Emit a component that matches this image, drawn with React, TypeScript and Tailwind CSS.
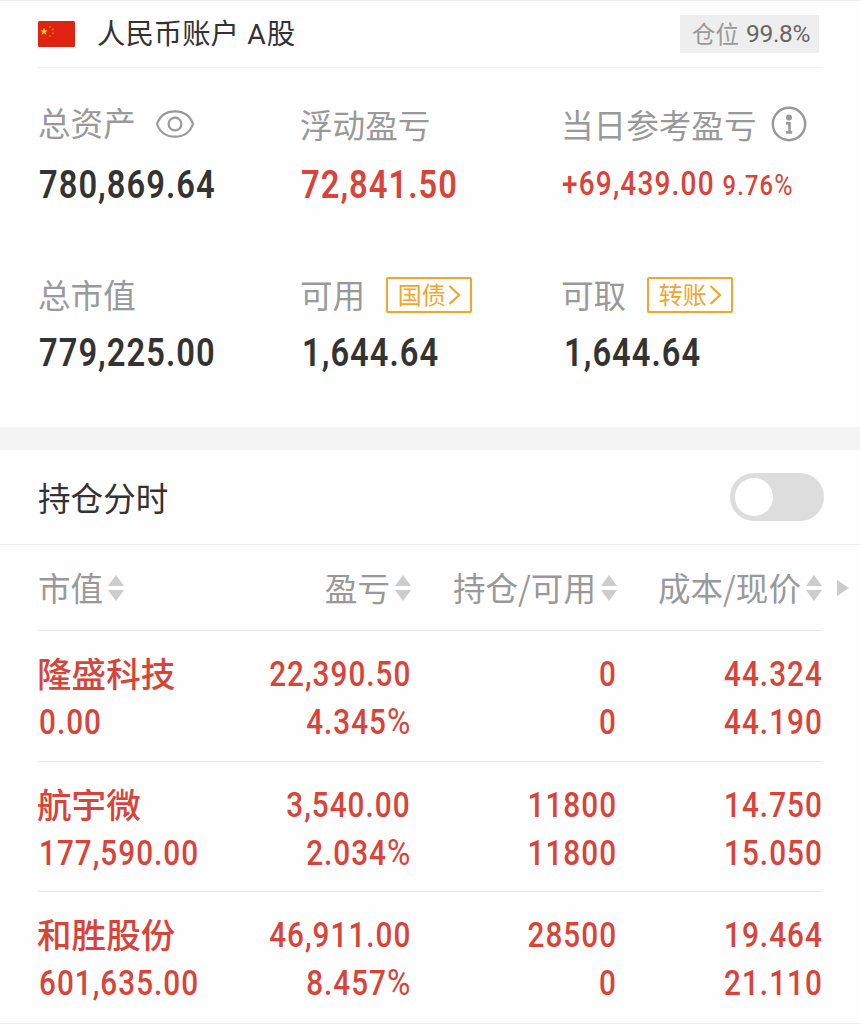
import { useState } from 'react';
import { clsx } from 'clsx';

type Holding = {
  name: string;
  marketValue: string;
  profit: string;
  profitRate: string;
  position: string;
  available: string;
  cost: string;
  price: string;
};

const holdings: Holding[] = [
  {
    name: '隆盛科技',
    marketValue: '0.00',
    profit: '22,390.50',
    profitRate: '4.345',
    position: '0',
    available: '0',
    cost: '44.324',
    price: '44.190',
  },
  {
    name: '航宇微',
    marketValue: '177,590.00',
    profit: '3,540.00',
    profitRate: '2.034',
    position: '11800',
    available: '11800',
    cost: '14.750',
    price: '15.050',
  },
  {
    name: '和胜股份',
    marketValue: '601,635.00',
    profit: '46,911.00',
    profitRate: '8.457',
    position: '28500',
    available: '0',
    cost: '19.464',
    price: '21.110',
  },
];

const columns = ['市值', '盈亏', '持仓/可用', '成本/现价'];

function FlagIcon() {
  return (
    <svg width="37" height="26" viewBox="0 0 37 26">
      <rect width="37" height="26" rx="1.5" fill="#de2310" />
      <path d="M6 6.8l1 2.5 2.7.1-2.1 1.7.7 2.6L6 12.2l-2.3 1.5.7-2.6-2.1-1.7 2.7-.1z" fill="#ffd21a" />
      <g fill="#f0701a">
        <circle cx="12" cy="5.8" r="1" />
        <circle cx="15" cy="8.6" r="1" />
        <circle cx="15" cy="12.2" r="1" />
        <circle cx="12" cy="15" r="1" />
      </g>
    </svg>
  );
}

function EyeIcon() {
  return (
    <svg width="40" height="30" viewBox="0 0 40 30" fill="none" stroke="#999" strokeWidth="2.2">
      <path d="M2 15C4.800 7 11.500 2.300 20 2.300S35.200 7 38 15C35.200 23 28.500 27.700 20 27.700S4.800 23 2 15z" />
      <circle cx="20" cy="15" r="6.400" />
    </svg>
  );
}

function InfoIcon() {
  return (
    <svg width="36" height="36" viewBox="0 0 36 36" fill="none">
      <circle cx="18" cy="18" r="16.200" stroke="#999" strokeWidth="2.400" />
      <circle cx="18" cy="11.500" r="3" fill="#999" />
      <path d="M15 17.200h3.500V26M14.800 26.400h6.400" stroke="#999" strokeWidth="2.600" />
    </svg>
  );
}

function SortIcon() {
  return (
    <svg width="16" height="26" viewBox="0 0 16 26" fill="#ccc" className="shrink-0">
      <path d="M8 0l8 11H0zM0 15h16L8 26z" />
    </svg>
  );
}

// Digits are squeezed a little and tracked out, like the DIN face used in trading apps.
function Num({ children, right, className }: { children: React.ReactNode; right?: boolean; className?: string }) {
  return (
    <span
      className={clsx(
        "inline-block whitespace-nowrap font-['Roboto','Noto_Sans_CJK_SC',sans-serif]",
        right ? 'origin-right' : 'origin-left',
        className
      )}
    >
      {children}
    </span>
  );
}

function TagButton({ label }: { label: string }) {
  return (
    <button className="flex h-[36px] w-[86px] items-center justify-center gap-0.5 rounded-[2px] border-2 border-[#f5a52b] text-[24px] leading-none text-[#f5a52b]">
      <span className="-mt-[2px]">{label}</span>
      <svg width="13" height="20" viewBox="0 0 13 20" fill="none" stroke="#f5a52b" strokeWidth="2.200">
        <path d="M1.500 1l9.500 9-9.500 9" />
      </svg>
    </button>
  );
}

function Label({ children }: { children: React.ReactNode }) {
  return <div className="flex h-[48px] items-center text-[32.600px] leading-none text-[#999]">{children}</div>;
}

const bigNum = 'scale-x-[0.86] text-[38px] font-semibold leading-[48px] tracking-[1.200px]';

function Summary() {
  return (
    <div className="grid grid-cols-[262px_261px_1fr] px-[38px] text-[#333]">
      <div className="h-[171px] pt-[32px]">
        <Label>
          <span className="-mt-[3px]">总资产</span>
          <span className="ml-[19px]">
            <EyeIcon />
          </span>
        </Label>
        <div className="mt-[13px] pl-px">
          <Num className={bigNum}>780,869.64</Num>
        </div>
      </div>
      <div className="h-[171px] pt-[32px]">
        <Label>浮动盈亏</Label>
        <div className="mt-[13px] pl-px text-[#d8433a]">
          <Num className={bigNum}>72,841.50</Num>
        </div>
      </div>
      <div className="h-[171px] pt-[32px]">
        <Label>
          <span className="whitespace-nowrap">当日参考盈亏</span>
          <span className="ml-[15px] shrink-0">
            <InfoIcon />
          </span>
        </Label>
        <div className="mt-[12px] pl-px text-[#d8433a]">
          <Num className="scale-x-[0.86] text-[32.500px] font-medium leading-[48px] tracking-[1.400px]">
            +69,439.00
            <span className="ml-[9px] text-[27.500px]">
              9.76<span className="text-[29px] font-normal">%</span>
            </span>
          </Num>
        </div>
      </div>

      <div className="h-[188px] pt-[31px]">
        <Label>总市值</Label>
        <div className="mt-[11px] pl-px">
          <Num className={bigNum}>779,225.00</Num>
        </div>
      </div>
      <div className="h-[188px] pt-[31px]">
        <Label>
          可用
          <span className="ml-[21px] mt-[2px]">
            <TagButton label="国债" />
          </span>
        </Label>
        <div className="mt-[11px] pl-[2px]">
          <Num className={bigNum}>1,644.64</Num>
        </div>
      </div>
      <div className="h-[188px] pt-[31px]">
        <Label>
          可取
          <span className="ml-[21px] mt-[2px]">
            <TagButton label="转账" />
          </span>
        </Label>
        <div className="mt-[11px] pl-[3px]">
          <Num className={bigNum}>1,644.64</Num>
        </div>
      </div>
    </div>
  );
}

const rowNum = 'scale-x-[0.86] text-[34.500px] font-medium leading-[48px] tracking-[1.200px]';

function HoldingRow({ item, last }: { item: Holding; last: boolean }) {
  return (
    <div
      className={clsx(
        'grid grid-cols-[167px_206px_206px_205px] pt-[19px] text-[#d8433a]',
        last ? 'h-[131px]' : 'h-[130.500px] border-b border-[#e9e9e9]'
      )}
    >
      <div>
        <div className="-ml-px h-[48px] whitespace-nowrap text-[34.600px] font-medium leading-[44px]">{item.name}</div>
        <div className="pl-px">
          <Num className={rowNum}>{item.marketValue}</Num>
        </div>
      </div>
      <div className="flex flex-col items-end">
        <Num right className={rowNum}>{item.profit}</Num>
        <Num right className={rowNum}>
          {item.profitRate}
          <span className="text-[37px] font-normal leading-none">%</span>
        </Num>
      </div>
      <div className="flex flex-col items-end">
        <Num right className={rowNum}>{item.position}</Num>
        <Num right className={rowNum}>{item.available}</Num>
      </div>
      <div className="-mr-px flex flex-col items-end">
        <Num right className={rowNum}>{item.cost}</Num>
        <Num right className={rowNum}>{item.price}</Num>
      </div>
    </div>
  );
}

export default function App() {
  const [intraday, setIntraday] = useState(false);

  return (
    <div className="h-[1024px] w-[860px] overflow-hidden border-t border-[#eee] bg-[#fefefe] font-['Noto_Sans_CJK_SC',sans-serif]">
      <header className="mx-[38px] flex h-[67px] items-center border-b border-[#f2f2f2]">
        <FlagIcon />
        <h1 className="ml-[22px] text-[28.400px] leading-none text-[#333]">
          人民币账户 <span className="ml-[2px] mr-px font-['Roboto']">A</span>股
        </h1>
        <div className="ml-auto mr-[3px] flex h-[38px] w-[139px] items-center whitespace-nowrap bg-[#eee] pl-[12px] text-[23.500px] leading-none text-[#999]">
          仓位
          <span className="ml-[7px] font-['Roboto'] text-[24.500px] tracking-[-0.300px] text-[#666]">99.8%</span>
        </div>
      </header>

      <Summary />

      <div className="h-[23px] bg-[#f4f4f4]" />

      <div className="flex h-[95px] items-center justify-between border-b border-[#eee] pl-[38px] pr-[36px]">
        <h2 className="text-[32.600px] leading-none text-[#333]">持仓分时</h2>
        <button
          role="switch"
          aria-checked={intraday}
          onClick={() => setIntraday((v) => !v)}
          className={clsx(
            'flex h-[48px] w-[94px] items-center rounded-full px-[5px]',
            intraday ? 'justify-end bg-[#d8433a]' : 'bg-[#ddd]'
          )}
        >
          <span className="size-[38px] rounded-full bg-white" />
        </button>
      </div>

      <div className="flex h-[85px] items-center pl-[38px] text-[32.600px] leading-none text-[#999]">
        <div className="grid grid-cols-[167px_206px_206px_205px]">
          {columns.map((col, i) => (
            <div key={col} className={clsx('flex items-center gap-[5px] whitespace-nowrap', i > 0 && 'justify-end')}>
              {col}
              <SortIcon />
            </div>
          ))}
        </div>
        <svg width="12" height="16" viewBox="0 0 12 16" fill="#ccc" className="ml-[15px]">
          <path d="M0 0l12 8-12 8z" />
        </svg>
      </div>

      <div className="mx-[38px] border-t border-[#e9e9e9]">
        {holdings.map((item, i) => (
          <HoldingRow key={item.name} item={item} last={i === holdings.length - 1} />
        ))}
      </div>
      <div className="border-t border-[#eee]" />
    </div>
  );
}
